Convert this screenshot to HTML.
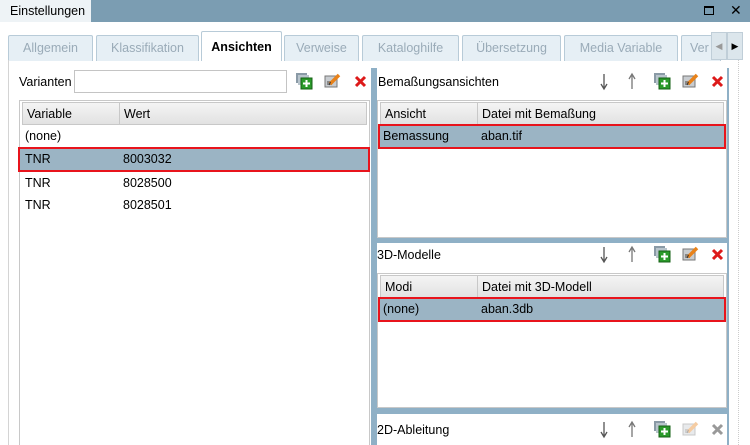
<!DOCTYPE html>
<html><head><meta charset="utf-8"><style>
*{margin:0;padding:0;box-sizing:border-box}
body{width:750px;height:445px;overflow:hidden;background:#fff;font-family:"Liberation Sans",sans-serif;font-size:12px;color:#000;position:relative}
.a{position:absolute}
.tab{position:absolute;top:35px;height:26px;border:1px solid #b8cbd8;border-bottom:none;background:#e6eff5;color:#9aabb8;font-size:12.5px;text-align:center;line-height:24px;border-radius:2px 2px 0 0}
.hdr{position:absolute;height:23px;background:linear-gradient(#f4f4f4,#e2e2e2);border:1px solid #c8c8c8;font-size:12.5px;line-height:22px;padding-left:4px}
.cell{position:absolute;font-size:12.5px;line-height:22px}
.sel{position:absolute;background:#9bb4c4;border:2px solid #e8141c}
</style></head><body>
<div class="a" style="left:0;top:0;width:750px;height:22px;background:#7b9db2"></div>
<div class="a" style="left:0;top:0;width:91px;height:22px;background:#eef3f6;font-size:12.5px;line-height:22px;padding-left:10px">Einstellungen</div>
<div class="a" style="left:704px;top:6px;width:10px;height:9px;border:1.5px solid #000;border-top-width:2.5px"></div>
<div class="a" style="left:730px;top:2px;font-size:14px;line-height:16px">✕</div>

<div class="tab" style="left:8px;width:85px">Allgemein</div>
<div class="tab" style="left:96px;width:103px">Klassifikation</div>
<div class="tab" style="left:201px;top:31px;height:30px;width:81px;background:#fff;color:#000;font-weight:bold;border-color:#b8cbd8;line-height:30px">Ansichten</div>
<div class="tab" style="left:284px;width:75px">Verweise</div>
<div class="tab" style="left:362px;width:97px">Kataloghilfe</div>
<div class="tab" style="left:462px;width:99px">Übersetzung</div>
<div class="tab" style="left:564px;width:114px">Media Variable</div>
<div class="tab" style="left:681px;width:40px;text-align:left;padding-left:8px">Ver</div>
<div class="a" style="left:711px;top:32px;width:16px;height:28px;background:#dce6ec;border:1px solid #c0ced8;color:#999;font-size:9px;line-height:26px;text-align:center">◀</div>
<div class="a" style="left:727px;top:32px;width:16px;height:28px;background:#dce6ec;border:1px solid #c0ced8;color:#000;font-size:9px;line-height:26px;text-align:center">▶</div>

<div class="a" style="left:8px;top:60px;width:1px;height:385px;background:#d4d4d4"></div>
<div class="a" style="left:19px;top:82px;font-size:12.5px;line-height:0">Varianten</div>
<div class="a" style="left:74px;top:70px;width:213px;height:23px;border:1px solid #c4c4c4;background:#fff"></div>

<div class="a" style="left:19px;top:100px;width:351px;height:345px;border:1px solid #c8c8c8;border-bottom:none;background:#fff"></div>
<div class="hdr" style="left:22px;top:102px;width:98px">Variable</div>
<div class="hdr" style="left:119px;top:102px;width:248px">Wert</div>
<div class="cell" style="left:25px;top:125px">(none)</div>
<div class="sel" style="left:18px;top:147px;width:352px;height:25px"></div>
<div class="cell" style="left:25px;top:148px">TNR</div><div class="cell" style="left:123px;top:148px">8003032</div>
<div class="cell" style="left:25px;top:172px">TNR</div><div class="cell" style="left:123px;top:172px">8028500</div>
<div class="cell" style="left:25px;top:194px">TNR</div><div class="cell" style="left:123px;top:194px">8028501</div>

<div class="a" style="left:371px;top:68px;width:358px;height:377px;background:#8fb0c6"></div>
<div class="a" style="left:738px;top:60px;width:1px;height:385px;border-left:1px dotted #ccc"></div>

<div class="a" style="left:377px;top:68px;width:350px;height:170px;background:#fff"></div>
<div class="a" style="left:378px;top:82px;font-size:12.5px;line-height:0">Bemaßungsansichten</div>
<div class="a" style="left:377px;top:100px;width:350px;height:138px;border:1px solid #c8c8c8"></div>
<div class="hdr" style="left:380px;top:102px;width:98px">Ansicht</div>
<div class="hdr" style="left:477px;top:102px;width:247px">Datei mit Bemaßung</div>
<div class="sel" style="left:378px;top:124px;width:348px;height:25px"></div>
<div class="cell" style="left:383px;top:125px">Bemassung</div><div class="cell" style="left:481px;top:125px">aban.tif</div>

<div class="a" style="left:377px;top:243px;width:350px;height:165px;background:#fff"></div>
<div class="a" style="left:377px;top:255px;font-size:12.5px;line-height:0">3D-Modelle</div>
<div class="a" style="left:377px;top:273px;width:350px;height:135px;border:1px solid #c8c8c8"></div>
<div class="hdr" style="left:380px;top:275px;width:98px">Modi</div>
<div class="hdr" style="left:477px;top:275px;width:247px">Datei mit 3D-Modell</div>
<div class="sel" style="left:378px;top:297px;width:348px;height:25px"></div>
<div class="cell" style="left:383px;top:298px">(none)</div><div class="cell" style="left:481px;top:298px">aban.3db</div>

<div class="a" style="left:377px;top:414px;width:350px;height:31px;background:#fff"></div>
<div class="a" style="left:377px;top:430px;font-size:12.5px;line-height:0">2D-Ableitung</div>

<svg class="a" style="left:0;top:0" width="750" height="445">
<defs>
<g id="add"><rect x="0" y="0" width="11" height="10" fill="#8a9aa6"/><rect x="2" y="2" width="11" height="10" fill="#b8c4cc"/><rect x="5" y="5" width="11" height="11" fill="#2a9a2a" stroke="#156015"/><path d="M10.5 7v7M7 10.5h7" stroke="#fff" stroke-width="2"/></g>
<g id="edit"><rect x="0" y="4" width="12" height="11" fill="#c8ccd0" stroke="#777"/><rect x="2" y="9" width="5" height="4" fill="#888"/><path d="M5 12L14 3" stroke="#e8821a" stroke-width="3.5"/><path d="M4 13l1.5-3" stroke="#333" stroke-width="1"/></g>
<g id="del"><path d="M2 2L11 11M11 2L2 11" stroke="#dd1a1a" stroke-width="3"/></g>
<g id="dn"><path d="M4 0v14M1 10l3 5 3-5" stroke="#555" stroke-width="1.3" fill="none"/></g>
<g id="up"><path d="M4 15V1M1 5l3-5 3 5" stroke="#777" stroke-width="1.3" fill="none"/></g>
</defs>
<use href="#add" x="296" y="73"/><use href="#edit" x="325" y="72"/><use href="#del" x="354" y="75"/>
<use href="#dn" x="600" y="74"/><use href="#up" x="628" y="74"/><use href="#add" x="654" y="73"/><use href="#edit" x="683" y="72"/><use href="#del" x="711" y="75"/>
<use href="#dn" x="600" y="247"/><use href="#up" x="628" y="247"/><use href="#add" x="654" y="246"/><use href="#edit" x="683" y="245"/><use href="#del" x="711" y="248"/>
<use href="#dn" x="600" y="422"/><use href="#up" x="628" y="422"/><use href="#add" x="654" y="421"/><g opacity="0.4"><use href="#edit" x="683" y="420"/></g><path d="M713 425L722 434M722 425L713 434" stroke="#999" stroke-width="3"/>
</svg>
</body></html>
